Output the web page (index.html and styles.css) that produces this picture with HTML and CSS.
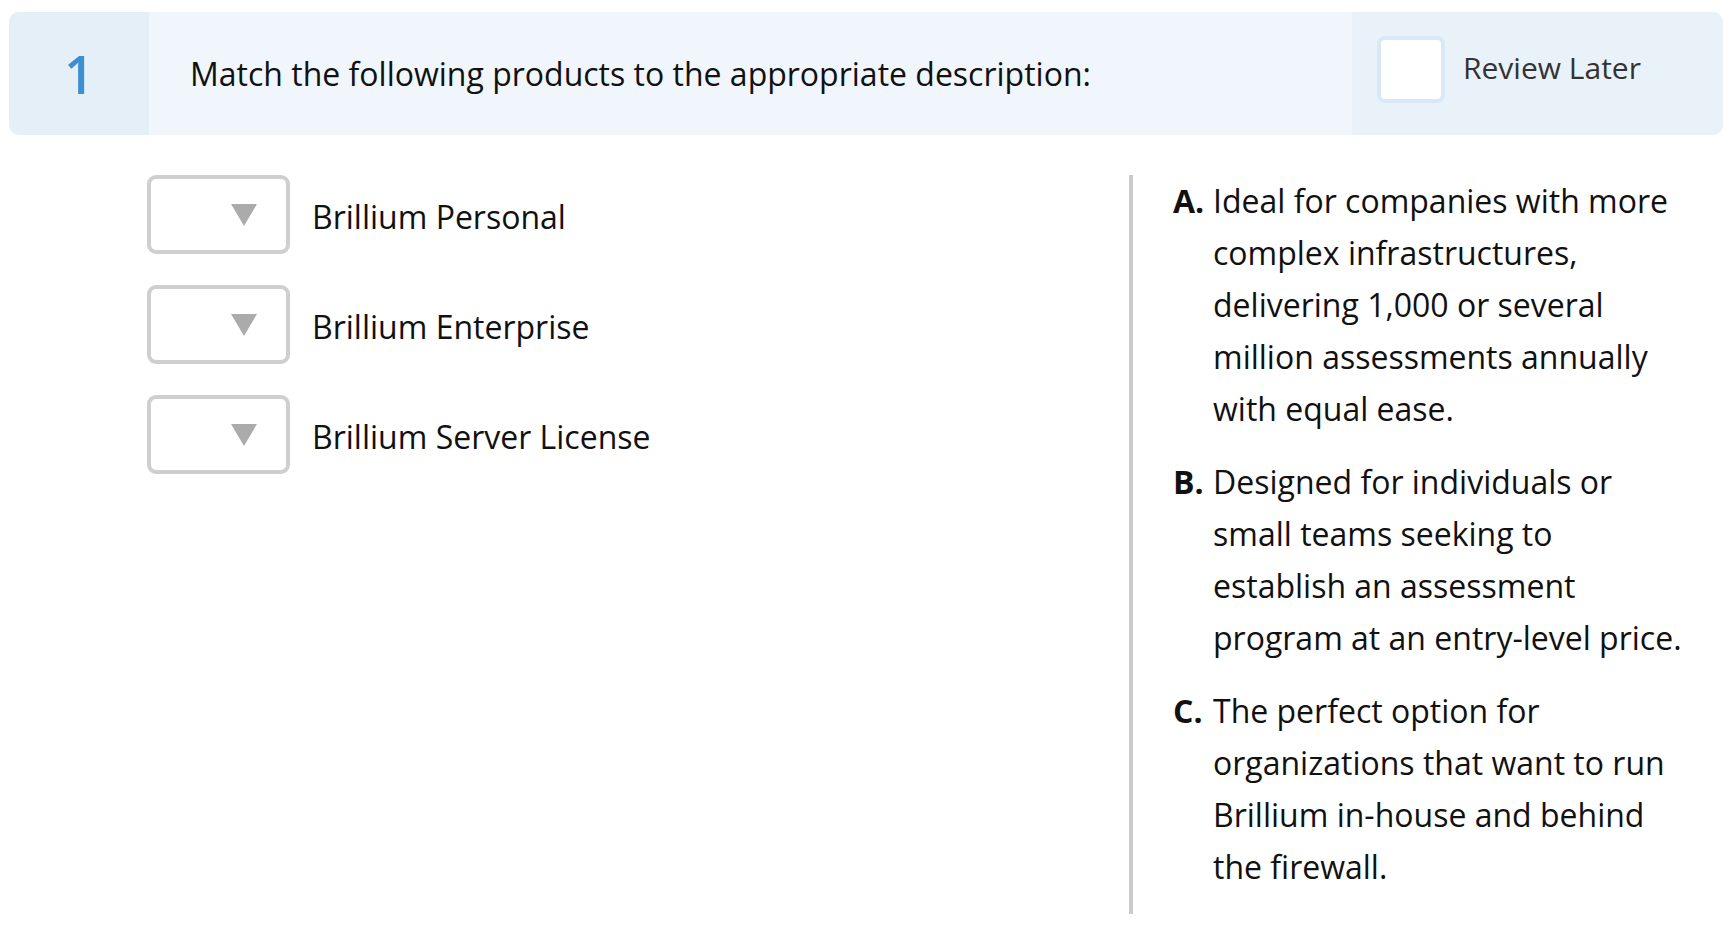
FILE: index.html
```html
<!DOCTYPE html>
<html lang="en">
<head>
    <meta charset="UTF-8">
    <meta name="viewport" content="width=device-width, initial-scale=1.0">
    <title>Question 1</title>
    <link rel="stylesheet" href="styles.css">
</head>
<body>

<div class="question">
    <div class="q-number">1</div>
    <div class="q-text">Match the following products to the appropriate description:</div>
    <label class="q-review">
        <span class="review-box"></span>
        <span>Review Later</span>
    </label>
</div>

<div class="answer">
    <div class="matches">
        <div class="match-row">
            <div class="dropdown"><span class="caret"></span></div>
            <span class="match-label">Brillium Personal</span>
        </div>
        <div class="match-row">
            <div class="dropdown"><span class="caret"></span></div>
            <span class="match-label">Brillium Enterprise</span>
        </div>
        <div class="match-row">
            <div class="dropdown"><span class="caret"></span></div>
            <span class="match-label">Brillium Server License</span>
        </div>
    </div>

    <ul class="options">
        <li>
            <b>A.</b>
            <span>Ideal for companies with more complex infrastructures, delivering 1,000 or several million assessments annually with equal ease.</span>
        </li>
        <li>
            <b>B.</b>
            <span>Designed for individuals or small teams seeking to establish an assessment program at an entry-level price.</span>
        </li>
        <li>
            <b>C.</b>
            <span>The perfect option for organizations that want to run Brillium in-house and behind the firewall.</span>
        </li>
    </ul>
</div>

</body>
</html>
```

FILE: styles.css
```css
body {
    font-family: "Open Sans", "Noto Sans", sans-serif;
    background-color: #fff;
    color: #111;
    margin: 0;
    padding: 0;
}
.question {
    display: flex;
    height: 123px;
    margin: 12px 11px 0 9px;
    border-radius: 10px;
    overflow: hidden;
    background-color: #f0f6fb;
}
.q-number {
    width: 140px;
    flex-shrink: 0;
    display: flex;
    align-items: center;
    justify-content: center;
    background-color: #e4eff7;
    color: #3d8fd3;
    font-size: 52px;
    font-weight: 600;
}
.q-text {
    flex: 1;
    display: flex;
    align-items: center;
    padding-left: 41px;
    font-size: 32px;
}
.q-review {
    width: 371px;
    flex-shrink: 0;
    box-sizing: border-box;
    display: flex;
    align-items: center;
    gap: 18px;
    padding: 0 0 9px 25px;
    background-color: #eaf2f9;
    color: #333;
    font-size: 30px;
}
.q-review span:last-child {
    margin-top: -4px;
}
.review-box {
    width: 60px;
    height: 59px;
    border: 4px solid #d8e8f6;
    border-radius: 8px;
    background-color: #fff;
}
.answer {
    display: flex;
    margin: 40px 11px 0 9px;
}
.matches {
    flex: 1;
    display: flex;
    flex-direction: column;
    gap: 31px;
    padding-left: 138px;
}
.match-row {
    display: flex;
    align-items: center;
    gap: 22px;
}
.dropdown {
    width: 106px;
    height: 71px;
    border: 4px solid #cfcfcf;
    border-radius: 9px;
    display: flex;
    align-items: center;
    justify-content: flex-end;
    padding-right: 29px;
}
.caret {
    width: 0;
    height: 0;
    border-left: 13.5px solid transparent;
    border-right: 13.5px solid transparent;
    border-top: 22px solid #ababab;
}
.match-label {
    font-size: 32px;
    margin-top: 4px;
}
.options {
    width: 594px;
    flex-shrink: 0;
    box-sizing: border-box;
    list-style: none;
    margin: 0;
    padding: 0 38px 0 40px;
    border-left: 4px solid #cccccc;
    font-size: 32px;
    line-height: 52px;
}
.options li {
    display: flex;
    margin-bottom: 21px;
}
.options b {
    width: 40px;
    flex-shrink: 0;
    font-weight: 700;
}
```
